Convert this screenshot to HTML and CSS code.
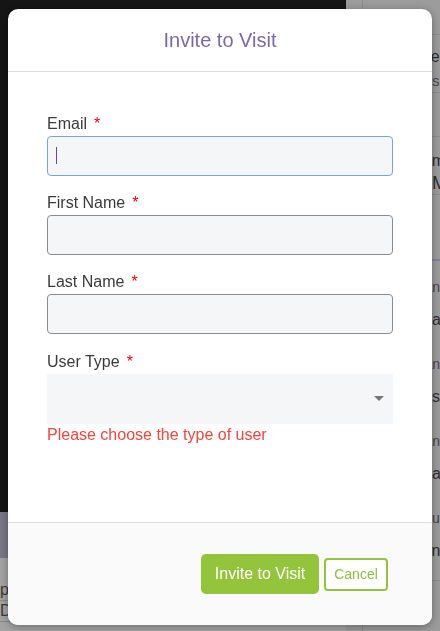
FILE: index.html
```html
<!DOCTYPE html>
<html lang="en">
<head>
<meta charset="utf-8">
<title>Invite to Visit</title>
<link rel="stylesheet" href="styles.css">
</head>
<body>
<div class="page">
  <div class="left">
    <div class="hero"></div>
    <div class="band"></div>
    <div class="lrows">
      <div class="lrow">pending</div>
      <div class="lrow">Details</div>
    </div>
  </div>
  <div class="right">
    <div class="panel">
      <div class="prow top"></div>
      <div class="prow head"><div class="t1 p34">Name</div><div class="t2 p34">Status :</div></div>
      <div class="prow gap1"></div>
      <div class="prow item"><div class="t1 p51">Item</div><div class="t3 p69">Main</div></div>
      <div class="prow gap2"></div>
      <div class="prow pair"><div class="t4 p49">Plan</div><div class="t5 p54">Clare</div></div>
      <div class="prow pair"><div class="t4 p49">Plan</div><div class="t5 p52">Jose</div></div>
      <div class="prow pair"><div class="t4 p49">Plan</div><div class="t5 p54">Clare</div></div>
      <div class="prow pair"><div class="t4 p51">Hour</div><div class="t5 p49">Ann</div></div>
      <div class="prow last"></div>
    </div>
  </div>
</div>

<div class="overlay">
  <div class="modal">
    <div class="modal-header">Invite to Visit</div>
    <div class="modal-body">
      <div class="field">
        <label class="label">Email<span class="req">*</span></label>
        <div class="input-wrap">
          <input class="input focus" type="text">
          <span class="caret"></span>
        </div>
      </div>
      <div class="field">
        <label class="label">First Name<span class="req">*</span></label>
        <input class="input" type="text">
      </div>
      <div class="field">
        <label class="label">Last Name<span class="req">*</span></label>
        <input class="input" type="text">
      </div>
      <div class="field last">
        <label class="label">User Type<span class="req">*</span></label>
        <div class="select"><span class="arrow"></span></div>
        <div class="error">Please choose the type of user</div>
      </div>
    </div>
    <div class="modal-footer">
      <button class="btn btn-primary" type="button">Invite to Visit</button>
      <button class="btn btn-secondary" type="button">Cancel</button>
    </div>
  </div>
</div>
</body>
</html>
```
FILE: styles.css
```css
* { box-sizing: border-box; }

body {
  margin: 0;
  width: 440px;
  height: 631px;
  overflow: hidden;
  background: #a3a3a3;
  font-family: "Liberation Sans", Arial, sans-serif;
}

/* dimmed page behind the dialog */
.page {
  display: flex;
  height: 631px;
}
.left {
  flex: none;
  width: 346px;
  display: flex;
  flex-direction: column;
}
.hero { height: 512px; background: #151515; }
.band { height: 46px; background: #7b7788; }
.lrows {
  flex: 1;
  background: #a4a4a4;
  padding-top: 22px;
}
.lrow {
  height: 21px;
  border-bottom: 1px solid #8a8a8a;
  font-size: 16px;
  line-height: 20px;
  color: #3a3a3a;
}
.right {
  flex: 1;
  min-width: 0;
  overflow: hidden;
  background: #9c9c9c;
  display: flex;
}
.panel {
  flex: 1;
  min-width: 0;
  margin-left: 16px;
  border-left: 1px solid #8a8a8a;
  display: flex;
  flex-direction: column;
  color: #2e2e2e;
}
.prow { white-space: nowrap; flex: none; }
.prow.top { height: 35px; border-bottom: 1px solid #8c8c8c; }
.prow.head { height: 58px; border-bottom: 1px solid #8c8c8c; padding-top: 12px; }
.prow.gap1 { height: 44px; border-bottom: 1px solid #8c8c8c; }
.prow.item { height: 58px; border-bottom: 1px solid #8c8c8c; padding-top: 14px; }
.prow.gap2 { height: 66px; border-bottom: 2px solid #86829a; }
.prow.pair { height: 77px; padding-top: 17px; }
.prow.last { height: 10px; border-top: 1px solid #8c8c8c; margin-top: 11px; }
.t1 { font-size: 16px; line-height: 20px; }
.t2 { font-size: 15px; line-height: 18px; color: #4a4a4a; margin-top: 5px; }
.t3 { font-size: 18px; line-height: 24px; }
.t4 { font-size: 14px; line-height: 18px; color: #444; }
.t5 { font-size: 16px; line-height: 20px; margin-top: 14px; }
.p34 { padding-left: 34px; }
.p49 { padding-left: 49px; }
.p51 { padding-left: 51px; }
.p52 { padding-left: 52px; }
.p54 { padding-left: 54px; }
.p69 { padding-left: 69px; }

/* dialog */
.overlay {
  position: fixed;
  top: 0;
  left: 0;
  right: 0;
  bottom: 0;
  padding: 9px 8px;
}
.modal {
  width: 424px;
  height: 616px;
  background: #fff;
  border-radius: 10px;
  overflow: hidden;
  display: flex;
  flex-direction: column;
  box-shadow: 0 2px 8px rgba(0, 0, 0, 0.35);
}
.modal-header {
  height: 63px;
  flex: none;
  border-bottom: 1px solid #e0e0e0;
  text-align: center;
  font-size: 20px;
  line-height: 62px;
  color: #7a69a8;
}
.modal-body {
  height: 450px;
  flex: none;
  padding: 42px 39px 0;
}
.field { margin-bottom: 17px; }
.field.last { margin-bottom: 0; padding-top: 1px; }
.label {
  display: block;
  font-size: 16px;
  line-height: 20px;
  color: #3a3a3a;
  margin-bottom: 2px;
}
.req {
  color: #e8000b;
  margin-left: 7px;
}
.input-wrap { position: relative; }
.input {
  display: block;
  width: 346px;
  height: 40px;
  margin: 0;
  padding: 0 8px;
  border: 1px solid #8c8c8c;
  border-radius: 4px;
  background: #f5f6f8;
  font: 16px "Liberation Sans", Arial, sans-serif;
  outline: none;
}
.input.focus { border-color: #7aa2e6; }
.caret {
  position: absolute;
  left: 9px;
  top: 11px;
  width: 1px;
  height: 17px;
  background: #6a3fc2;
}
.select {
  height: 50px;
  background: #f5f6f8;
  display: flex;
  justify-content: flex-end;
  align-items: center;
  padding-right: 9px;
}
.arrow {
  width: 0;
  height: 0;
  border-left: 5px solid transparent;
  border-right: 5px solid transparent;
  border-top: 5px solid #767676;
  margin-top: -1px;
}
.error {
  margin-top: 1px;
  font-size: 16px;
  line-height: 20px;
  color: #f2443c;
}
.modal-footer {
  flex: 1;
  background: #fafafa;
  border-top: 1px solid #dedede;
  display: flex;
  justify-content: flex-end;
  align-items: center;
  gap: 5px;
  padding-right: 44px;
}
.btn {
  margin: 0;
  cursor: pointer;
  font-family: "Liberation Sans", Arial, sans-serif;
}
.btn-primary {
  width: 118px;
  height: 40px;
  border: none;
  border-radius: 5px;
  background: #94c43c;
  color: #fff;
  font-size: 16px;
}
.btn-secondary {
  width: 64px;
  height: 33px;
  border: 2px solid #94c43f;
  border-radius: 4px;
  background: #fff;
  color: #8cc03c;
  font-size: 14px;
  padding: 0;
}
```
